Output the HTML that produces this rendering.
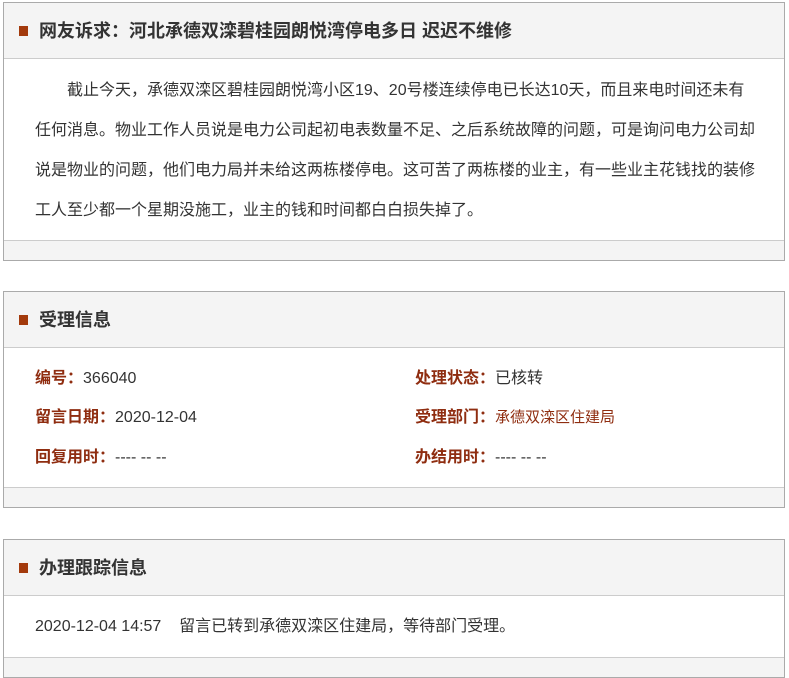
<!DOCTYPE html>
<html><head><meta charset="utf-8"><style>
*{margin:0;padding:0;box-sizing:border-box}
body{width:789px;height:662px;overflow:hidden;background:#fff;font-family:"Liberation Sans","Noto Sans CJK SC",sans-serif;color:#333}
.box{position:absolute;left:3px;width:782px;border:1px solid #aaa;background:#fff}
.hd{height:56px;background:#f4f4f4;border-bottom:1px solid #ccc;position:relative;font-size:18px;font-weight:bold;color:#333;line-height:56px;padding-left:35px}
.hd:before{content:"";position:absolute;left:15px;top:23px;width:9px;height:10px;background:#a33a0c}
.ft{height:20px;background:#f4f4f4;border-top:1px solid #ccc}
.p{font-size:16px;line-height:40px;padding:12px 24px 0 31px;text-indent:32px;height:181px}
.info{position:relative;height:139px;font-size:16px}
.r{position:absolute;line-height:20px;white-space:nowrap}
.l{color:#8f2d10;font-weight:bold}
</style></head><body>
<div class="box" style="top:2px">
<div class="hd">网友诉求：河北承德双滦碧桂园朗悦湾停电多日 迟迟不维修</div>
<div class="p">截止今天，承德双滦区碧桂园朗悦湾小区19、20号楼连续停电已长达10天，而且来电时间还未有任何消息。物业工作人员说是电力公司起初电表数量不足、之后系统故障的问题，可是询问电力公司却说是物业的问题，他们电力局并未给这两栋楼停电。这可苦了两栋楼的业主，有一些业主花钱找的装修工人至少都一个星期没施工，业主的钱和时间都白白损失掉了。</div>
<div class="ft"></div>
</div>
<div class="box" style="top:291px">
<div class="hd">受理信息</div>
<div class="info">
<div class="r" style="left:31px;top:21px"><span class="l">编号：</span>366040</div>
<div class="r" style="left:31px;top:60px"><span class="l">留言日期：</span>2020-12-04</div>
<div class="r" style="left:31px;top:100px"><span class="l">回复用时：</span>---- -- --</div>
<div class="r" style="left:411px;top:21px"><span class="l">处理状态：</span>已核转</div>
<div class="r" style="left:411px;top:60px"><span class="l">受理部门：</span><span style="color:#8f2d10;font-size:15px">承德双滦区住建局</span></div>
<div class="r" style="left:411px;top:100px"><span class="l">办结用时：</span>---- -- --</div>
</div>
<div class="ft"></div>
</div>
<div class="box" style="top:539px">
<div class="hd">办理跟踪信息</div>
<div class="info" style="height:61px"><div class="r" style="left:31px;top:21px">2020-12-04 14:57&nbsp;&nbsp;&nbsp;&nbsp;留言已转到承德双滦区住建局，等待部门受理。</div></div>
<div class="ft"></div>
</div>
</body></html>
